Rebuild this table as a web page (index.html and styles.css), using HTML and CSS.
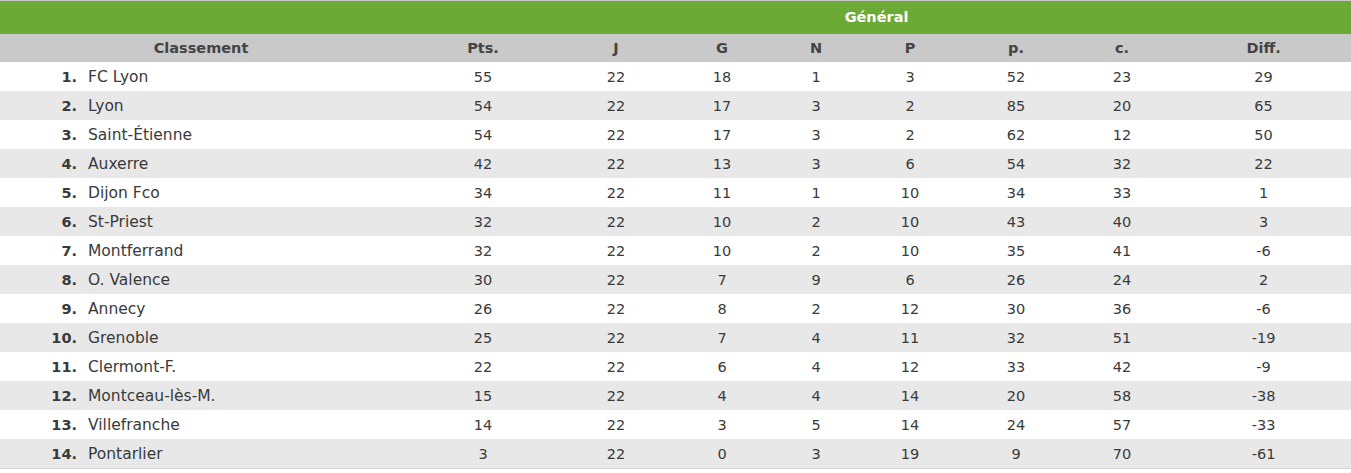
FILE: index.html
```html
<!DOCTYPE html>
<html lang="fr">
<head>
<meta charset="utf-8">
<title>Classement</title>
<link rel="stylesheet" href="styles.css">
</head>
<body>
<table class="standings">
  <colgroup>
    <col class="c-rank"><col class="c-name"><col class="c-pts"><col class="c-j"><col class="c-g"><col class="c-n"><col class="c-p"><col class="c-bp"><col class="c-bc"><col class="c-diff">
  </colgroup>
  <thead>
    <tr class="top">
      <th colspan="2"></th>
      <th colspan="8">Général</th>
    </tr>
    <tr class="sub">
      <th colspan="2">Classement</th>
      <th>Pts.</th><th>J</th><th>G</th><th>N</th><th>P</th><th>p.</th><th>c.</th><th>Diff.</th>
    </tr>
  </thead>
  <tbody>
    <tr><td class="rank">1.</td><td class="name">FC Lyon</td><td>55</td><td>22</td><td>18</td><td>1</td><td>3</td><td>52</td><td>23</td><td>29</td></tr>
    <tr><td class="rank">2.</td><td class="name">Lyon</td><td>54</td><td>22</td><td>17</td><td>3</td><td>2</td><td>85</td><td>20</td><td>65</td></tr>
    <tr><td class="rank">3.</td><td class="name">Saint-Étienne</td><td>54</td><td>22</td><td>17</td><td>3</td><td>2</td><td>62</td><td>12</td><td>50</td></tr>
    <tr><td class="rank">4.</td><td class="name">Auxerre</td><td>42</td><td>22</td><td>13</td><td>3</td><td>6</td><td>54</td><td>32</td><td>22</td></tr>
    <tr><td class="rank">5.</td><td class="name">Dijon Fco</td><td>34</td><td>22</td><td>11</td><td>1</td><td>10</td><td>34</td><td>33</td><td>1</td></tr>
    <tr><td class="rank">6.</td><td class="name">St-Priest</td><td>32</td><td>22</td><td>10</td><td>2</td><td>10</td><td>43</td><td>40</td><td>3</td></tr>
    <tr><td class="rank">7.</td><td class="name">Montferrand</td><td>32</td><td>22</td><td>10</td><td>2</td><td>10</td><td>35</td><td>41</td><td>-6</td></tr>
    <tr><td class="rank">8.</td><td class="name">O. Valence</td><td>30</td><td>22</td><td>7</td><td>9</td><td>6</td><td>26</td><td>24</td><td>2</td></tr>
    <tr><td class="rank">9.</td><td class="name">Annecy</td><td>26</td><td>22</td><td>8</td><td>2</td><td>12</td><td>30</td><td>36</td><td>-6</td></tr>
    <tr><td class="rank">10.</td><td class="name">Grenoble</td><td>25</td><td>22</td><td>7</td><td>4</td><td>11</td><td>32</td><td>51</td><td>-19</td></tr>
    <tr><td class="rank">11.</td><td class="name">Clermont-F.</td><td>22</td><td>22</td><td>6</td><td>4</td><td>12</td><td>33</td><td>42</td><td>-9</td></tr>
    <tr><td class="rank">12.</td><td class="name">Montceau-lès-M.</td><td>15</td><td>22</td><td>4</td><td>4</td><td>14</td><td>20</td><td>58</td><td>-38</td></tr>
    <tr><td class="rank">13.</td><td class="name">Villefranche</td><td>14</td><td>22</td><td>3</td><td>5</td><td>14</td><td>24</td><td>57</td><td>-33</td></tr>
    <tr><td class="rank">14.</td><td class="name">Pontarlier</td><td>3</td><td>22</td><td>0</td><td>3</td><td>19</td><td>9</td><td>70</td><td>-61</td></tr>
  </tbody>
</table>
</body>
</html>
```

FILE: styles.css
```css
html, body {
  margin: 0;
  padding: 0;
  background: #ffffff;
}

.standings {
  width: 1351px;
  border-collapse: collapse;
  table-layout: fixed;
  font-family: "DejaVu Sans", "Liberation Sans", sans-serif;
  font-size: 14.5px;
  color: #3a3a3a;
  border-top: 1px solid #c8c8c8;
  border-bottom: 1px solid #d4d4d4;
}

.c-rank { width: 79px; }
.c-name { width: 323px; }
.c-pts { width: 162px; }
.c-j { width: 104px; }
.c-g { width: 108px; }
.c-n { width: 80px; }
.c-p { width: 108px; }
.c-bp { width: 104px; }
.c-bc { width: 108px; }
.c-diff { width: 175px; }

.standings th,
.standings td {
  padding: 0;
  text-align: center;
  white-space: nowrap;
}

.top th {
  background: #6aaa35;
  color: #ffffff;
  font-weight: bold;
  height: 31px;
  padding-bottom: 2px;
}

.sub th {
  background: #c9c9c9;
  color: #444444;
  font-weight: bold;
  height: 28px;
}

.standings tbody td {
  height: 29px;
}

.standings tbody tr:nth-child(even) td {
  background: #e8e8e8;
}

.standings td.rank {
  text-align: right;
  font-weight: bold;
  font-size: 14.5px;
  padding-right: 2px;
}

.standings td.name {
  text-align: left;
  padding-left: 9px;
  font-size: 15.5px;
}
```
